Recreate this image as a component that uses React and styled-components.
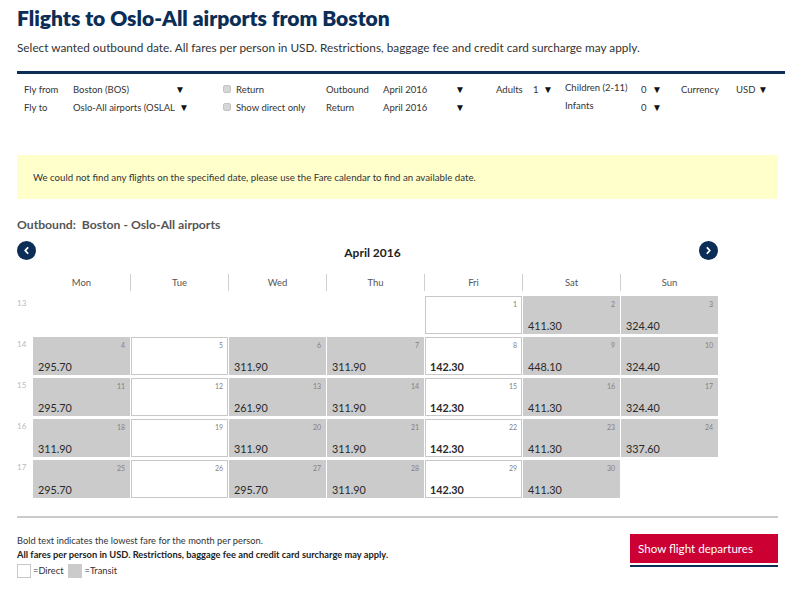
import React from "react";
import styled, { createGlobalStyle } from "styled-components";

const NAVY = "#0b2d56";
const TEXT = "#2f2f2f";
const GREY_CELL = "#cbcbcb";

const GlobalStyle = createGlobalStyle`
  html, body { margin: 0; padding: 0; background: #fff; }
  body { font-family: Lato, "Open Sans", Arial, sans-serif; color: ${TEXT}; }
  * { box-sizing: border-box; }
`;

const Page = styled.div`
  width: 790px;
  padding: 6px 12px 0 17px;
`;

const Title = styled.h1`
  margin: 0;
  font-size: 21px;
  line-height: 24px;
  font-weight: 800;
  color: ${NAVY};
`;

const Lead = styled.p`
  margin: 11px 0 0;
  font-size: 11.8px;
  line-height: 14px;
  color: #333;
`;

/* search form */
const SearchForm = styled.div`
  margin: 16px -7px 0 0;
  border-top: 3px solid ${NAVY};
  padding: 6px 0 0 7px;
  display: grid;
  grid-template-columns: 49px 150px 103px 57px 113px 37px 32px 76px 40px 55px 1fr;
  grid-auto-rows: 18px;
  align-items: center;
  font-size: 9.5px;
  color: #333;
`;

const Label = styled.span`
  white-space: nowrap;
  transform: translateY(${(p) => (p.$raise ? "-2px" : "0")});
`;

const Select = styled.span`
  display: flex;
  align-items: center;
  justify-content: space-between;
  width: ${(p) => p.$w}px;
  white-space: nowrap;
`;

const Arrow = styled.span`
  font-size: 10px;
  color: #111;
  margin-left: ${(p) => p.$gap || 0}px;
`;

const Check = styled.label`
  display: flex;
  align-items: center;
  gap: 5px;
  white-space: nowrap;
`;

const Box = styled.span`
  width: 8px;
  height: 8px;
  border-radius: 2px;
  background: #d6d6d6;
  border: 1px solid #c4c4c4;
`;

const Notice = styled.div`
  margin-top: 39px;
  height: 44px;
  background: #ffffcc;
  padding: 0 16px;
  display: flex;
  align-items: center;
  font-size: 9.7px;
  color: #333;
`;

const Route = styled.h2`
  margin: 19px 0 0;
  font-size: 12.2px;
  line-height: 14px;
  font-weight: 700;
  color: #555;
  white-space: pre;
`;

/* calendar */
const Calendar = styled.div`
  width: 701px;
  margin-top: 8px;
`;

const MonthBar = styled.div`
  display: flex;
  align-items: center;
  justify-content: space-between;
  height: 20px;
`;

const NavButton = styled.button`
  width: 19px;
  height: 19px;
  border-radius: 50%;
  border: 0;
  padding: 0;
  background: ${NAVY};
  display: flex;
  align-items: center;
  justify-content: center;
  cursor: pointer;
`;

const Month = styled.span`
  font-size: 12px;
  font-weight: 700;
  color: #222;
  margin: 5px 0 0 10px;
`;

const Grid = styled.div`
  display: grid;
  grid-template-columns: 15px repeat(7, 97px);
  column-gap: 1px;
  row-gap: 3px;
  grid-auto-rows: 38px;
`;

const HeadRow = styled(Grid)`
  grid-auto-rows: 17px;
  margin: 14px 0 5px;
`;

const DayName = styled.div`
  font-size: 9.5px;
  color: #555;
  display: flex;
  align-items: center;
  justify-content: center;
  border-left: ${(p) => (p.$first ? "0" : "1px solid #cfcfcf")};
  margin-left: ${(p) => (p.$first ? "0" : "-1px")};
`;

const Week = styled.div`
  font-size: 8px;
  color: #bbb;
  padding-top: 2px;
`;

const Cell = styled.div`
  position: relative;
  background: ${(p) => (p.$kind === "transit" ? GREY_CELL : "#fff")};
  border: ${(p) => (p.$kind === "direct" ? "1px solid #c8c8c8" : "1px solid transparent")};
  border-width: ${(p) => (p.$kind === "empty" ? "0" : "1px")};
`;

const DayNum = styled.span`
  position: absolute;
  top: 3px;
  right: 4px;
  font-size: 7px;
  color: #8a7f80;
`;

const Price = styled.span`
  position: absolute;
  left: 4px;
  bottom: 1px;
  font-size: 10.8px;
  font-weight: ${(p) => (p.$low ? 700 : 400)};
  color: #2a2a2a;
`;

const Divider = styled.hr`
  margin: 18px 0 0;
  border: 0;
  height: 2px;
  background: #cbcbcb;
`;

const Footer = styled.div`
  display: flex;
  justify-content: space-between;
  align-items: flex-start;
  padding-top: 16px;
`;

const Notes = styled.div`
  font-size: 9.3px;
  line-height: 14px;
  color: #333;
`;

const Strong = styled.div`
  font-weight: 700;
  color: #222;
`;

const Legend = styled.div`
  display: flex;
  align-items: center;
  margin-top: 2px;
`;

const Swatch = styled.span`
  width: 14px;
  height: 14px;
  background: ${(p) => (p.$grey ? GREY_CELL : "#fff")};
  border: 1px solid ${(p) => (p.$grey ? GREY_CELL : "#c8c8c8")};
  margin-right: 2px;
`;

const LegendText = styled.span`
  margin-right: 5px;
`;

const Primary = styled.button`
  width: 148px;
  height: 29px;
  border: 0;
  background: #cc0033;
  color: #fff;
  font-family: inherit;
  font-size: 11.6px;
  text-align: left;
  padding: 0 8px;
  box-shadow: 0 2px 0 #fff, 0 4px 0 ${NAVY};
  cursor: pointer;
`;

const Chevron = ({ dir }) => (
  <svg width="9" height="9" viewBox="0 0 10 10" aria-hidden="true">
    <path
      d={dir === "left" ? "M6.3 2 L3.5 5 L6.3 8" : "M3.7 2 L6.5 5 L3.7 8"}
      fill="none"
      stroke="#fff"
      strokeWidth="2"
      strokeLinecap="round"
      strokeLinejoin="round"
    />
  </svg>
);

const days = ["Mon", "Tue", "Wed", "Thu", "Fri", "Sat", "Sun"];

// [day, kind, price, lowest]
const weeks = [
  {
    no: 13,
    cells: [null, null, null, null, [1, "direct"], [2, "transit", "411.30"], [3, "transit", "324.40"]],
  },
  {
    no: 14,
    cells: [
      [4, "transit", "295.70"],
      [5, "direct"],
      [6, "transit", "311.90"],
      [7, "transit", "311.90"],
      [8, "direct", "142.30", true],
      [9, "transit", "448.10"],
      [10, "transit", "324.40"],
    ],
  },
  {
    no: 15,
    cells: [
      [11, "transit", "295.70"],
      [12, "direct"],
      [13, "transit", "261.90"],
      [14, "transit", "311.90"],
      [15, "direct", "142.30", true],
      [16, "transit", "411.30"],
      [17, "transit", "324.40"],
    ],
  },
  {
    no: 16,
    cells: [
      [18, "transit", "311.90"],
      [19, "direct"],
      [20, "transit", "311.90"],
      [21, "transit", "311.90"],
      [22, "direct", "142.30", true],
      [23, "transit", "411.30"],
      [24, "transit", "337.60"],
    ],
  },
  {
    no: 17,
    cells: [
      [25, "transit", "295.70"],
      [26, "direct"],
      [27, "transit", "295.70"],
      [28, "transit", "311.90"],
      [29, "direct", "142.30", true],
      [30, "transit", "411.30"],
      null,
    ],
  },
];

export default function App() {
  return (
    <Page>
      <GlobalStyle />
      <Title>Flights to Oslo-All airports from Boston</Title>
      <Lead>
        Select wanted outbound date. All fares per person in USD. Restrictions, baggage fee and credit card
        surcharge may apply.
      </Lead>

      <SearchForm>
        <Label>Fly from</Label>
        <Select $w={112}>
          Boston (BOS)<Arrow>▼</Arrow>
        </Select>
        <Check>
          <Box />
          Return
        </Check>
        <Label>Outbound</Label>
        <Select $w={82}>
          April 2016<Arrow>▼</Arrow>
        </Select>
        <Label>Adults</Label>
        <Select $w={20}>
          1<Arrow>▼</Arrow>
        </Select>
        <Label $raise>Children (2-11)</Label>
        <Select $w={21}>
          0<Arrow>▼</Arrow>
        </Select>
        <Label>Currency</Label>
        <Select $w={32}>
          USD<Arrow>▼</Arrow>
        </Select>

        <Label>Fly to</Label>
        <Select $w={116}>
          Oslo-All airports (OSLAL<Arrow $gap={4}>▼</Arrow>
        </Select>
        <Check>
          <Box />
          Show direct only
        </Check>
        <Label>Return</Label>
        <Select $w={82}>
          April 2016<Arrow>▼</Arrow>
        </Select>
        <span />
        <span />
        <Label $raise>Infants</Label>
        <Select $w={21}>
          0<Arrow>▼</Arrow>
        </Select>
      </SearchForm>

      <Notice>We could not find any flights on the specified date, please use the Fare calendar to find an available date.</Notice>

      <Route>{"Outbound:  Boston - Oslo-All airports"}</Route>

      <Calendar>
        <MonthBar>
          <NavButton aria-label="Previous month">
            <Chevron dir="left" />
          </NavButton>
          <Month>April 2016</Month>
          <NavButton aria-label="Next month">
            <Chevron dir="right" />
          </NavButton>
        </MonthBar>

        <HeadRow>
          <span />
          {days.map((d, i) => (
            <DayName key={d} $first={i === 0}>
              {d}
            </DayName>
          ))}
        </HeadRow>

        <Grid>
          {weeks.map((w) => (
            <React.Fragment key={w.no}>
              <Week>{w.no}</Week>
              {w.cells.map((c, i) =>
                c ? (
                  <Cell key={i} $kind={c[1]}>
                    <DayNum>{c[0]}</DayNum>
                    {c[2] && <Price $low={c[3]}>{c[2]}</Price>}
                  </Cell>
                ) : (
                  <Cell key={i} $kind="empty" />
                )
              )}
            </React.Fragment>
          ))}
        </Grid>
      </Calendar>

      <Divider />

      <Footer>
        <Notes>
          <div>Bold text indicates the lowest fare for the month per person.</div>
          <Strong>All fares per person in USD. Restrictions, baggage fee and credit card surcharge may apply.</Strong>
          <Legend>
            <Swatch />
            <LegendText>=Direct</LegendText>
            <Swatch $grey />
            <LegendText>=Transit</LegendText>
          </Legend>
        </Notes>
        <Primary>Show flight departures</Primary>
      </Footer>
    </Page>
  );
}
